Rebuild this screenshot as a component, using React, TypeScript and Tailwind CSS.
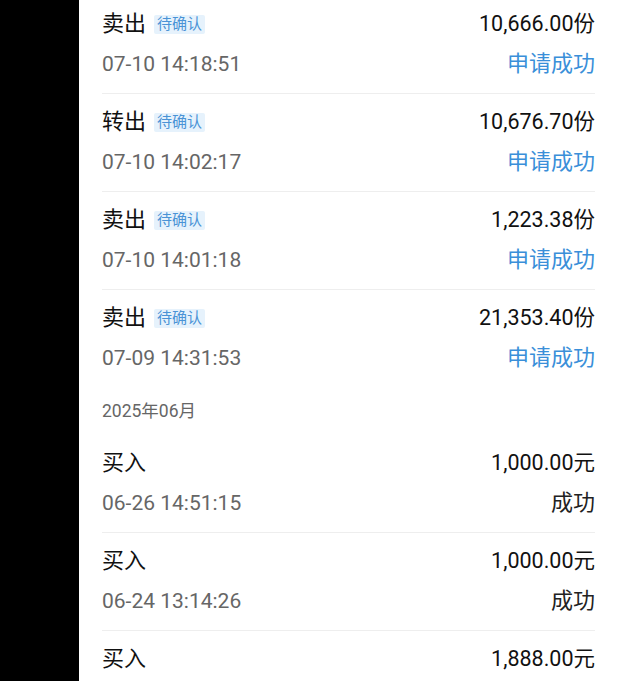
import React from 'react';

type Record = {
  type: string;
  pending?: boolean;
  amount: string;
  time: string;
  status: string;
  applied?: boolean;
};

const july: Record[] = [
  { type: '卖出', pending: true, amount: '10,666.00份', time: '07-10 14:18:51', status: '申请成功', applied: true },
  { type: '转出', pending: true, amount: '10,676.70份', time: '07-10 14:02:17', status: '申请成功', applied: true },
  { type: '卖出', pending: true, amount: '1,223.38份', time: '07-10 14:01:18', status: '申请成功', applied: true },
  { type: '卖出', pending: true, amount: '21,353.40份', time: '07-09 14:31:53', status: '申请成功', applied: true },
];

const june: Record[] = [
  { type: '买入', amount: '1,000.00元', time: '06-26 14:51:15', status: '成功' },
  { type: '买入', amount: '1,000.00元', time: '06-24 13:14:26', status: '成功' },
  { type: '买入', amount: '1,888.00元', time: '06-20 10:22:41', status: '成功' },
];

const Row: React.FC<{ item: Record; last?: boolean }> = ({ item, last }) => (
  <div className={`pt-[13px] pb-[14px] ${last ? 'border-b border-transparent' : 'border-b border-[#eeeeee]'}`}>
    <div className="flex h-[30px] items-center justify-between">
      <div className="flex items-center">
        <span className="text-[22px] leading-[30px] text-[#111111]">{item.type}</span>
        {item.pending && (
          <span className="ml-[8px] rounded-[2px] bg-[#e6f2fc] px-[3px] text-[15px] leading-[19px] text-[#4a93d6]">
            待确认
          </span>
        )}
      </div>
      <span className="text-[21.5px] leading-[30px] text-[#111111]">{item.amount}</span>
    </div>
    <div className="mt-[10px] flex h-[30px] items-center justify-between">
      <span className="text-[21px] leading-[30px] text-[#666666]">{item.time}</span>
      <span className={`text-[22px] leading-[30px] ${item.applied ? 'text-[#3a8fd9]' : 'text-[#222222]'}`}>
        {item.status}
      </span>
    </div>
  </div>
);

export default function App() {
  return (
    <div
      className="flex h-[681px] w-[619px] overflow-hidden bg-black"
      style={{ fontFamily: 'Roboto, "Noto Sans CJK SC", sans-serif' }}
    >
      <div className="w-[79px] shrink-0 bg-black" />
      <div className="flex-1 bg-white px-[24px] pl-[23px]">
        <div className="mt-[-4px]">
          {july.map((item, i) => (
            <Row key={i} item={item} last={i === july.length - 1} />
          ))}
          <div className="flex h-[47px] items-center text-[17.5px] text-[#666666]">2025年06月</div>
          {june.map((item, i) => (
            <Row key={i} item={item} />
          ))}
        </div>
      </div>
    </div>
  );
}
